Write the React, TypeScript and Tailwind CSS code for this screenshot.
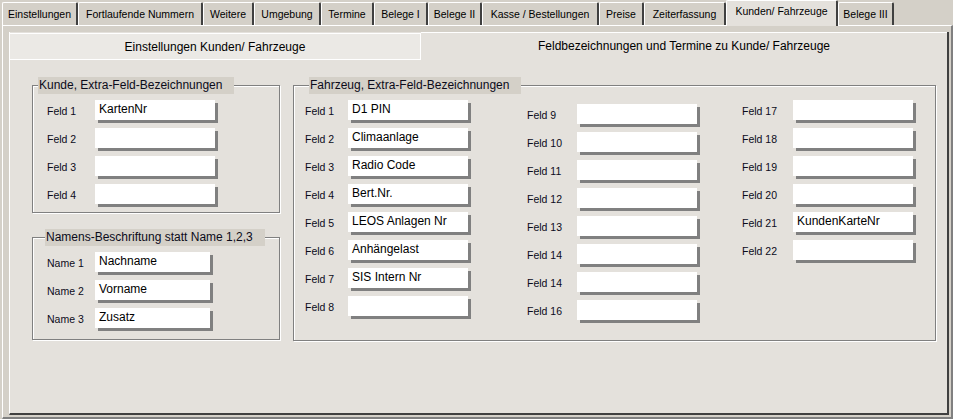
const topTabs = [
  { label: 'Einstellungen', w: 'w-[76px]' },
  { label: 'Fortlaufende Nummern', w: 'w-[125px]' },
  { label: 'Weitere', w: 'w-[51px]' },
  { label: 'Umgebung', w: 'w-[67px]' },
  { label: 'Termine', w: 'w-[53px]' },
  { label: 'Belege I', w: 'w-[54px]' },
  { label: 'Belege II', w: 'w-[54px]' },
  { label: 'Kasse / Bestellungen', w: 'w-[117px]' },
  { label: 'Preise', w: 'w-[45px]' },
  { label: 'Zeiterfassung', w: 'w-[82px]' },
  { label: 'Kunden/ Fahrzeuge', w: 'w-[112px]', active: true },
  { label: 'Belege III', w: 'w-[56px]' },
];

const kundeFields = ['KartenNr', '', '', ''];
const names = ['Nachname', 'Vorname', 'Zusatz'];
const col1 = ['D1 PIN', 'Climaanlage', 'Radio Code', 'Bert.Nr.', 'LEOS Anlagen Nr', 'Anhängelast', 'SIS Intern Nr', ''];
const col2 = ['Feld 9', 'Feld 10', 'Feld 11', 'Feld 12', 'Feld 13', 'Feld 14', 'Feld 14', 'Feld 16'];
const col3 = [
  { label: 'Feld 17', value: '' },
  { label: 'Feld 18', value: '' },
  { label: 'Feld 19', value: '' },
  { label: 'Feld 20', value: '' },
  { label: 'Feld 21', value: 'KundenKarteNr' },
  { label: 'Feld 22', value: '' },
];

function TextBox({ value, width }: { value: string; width: string }) {
  return (
    <div className={`${width} h-[20px] bg-white pl-[4px] text-[12px] leading-[18px] text-black shadow-[3px_3px_0_#808080]`}>
      {value}
    </div>
  );
}

function Row({ label, value, labelW, inputW }: { label: string; value: string; labelW: string; inputW: string }) {
  return (
    <div className="flex items-center">
      <span className={`${labelW} pt-[3px] text-[10.5px] text-[#0b0b1a]`}>{label}</span>
      <TextBox value={value} width={inputW} />
    </div>
  );
}

function GroupBox({ title, legendMl, className, children }: { title: string; legendMl: string; className: string; children: React.ReactNode }) {
  return (
    <div className={`${className} border border-[#808080] shadow-[1px_1px_0_#fff,inset_1px_1px_0_#fff]`}>
      <div className={`${legendMl} -mt-[9px] h-[17px] w-fit bg-[#d4d0c8] pl-[1px] pr-[12px] text-[12px] leading-[17px] text-[#0b0b1a]`}>
        {title}
      </div>
      {children}
    </div>
  );
}

export default function App() {
  return (
    <div className="flex h-[419px] w-[953px] flex-col overflow-hidden bg-[#d4d0c8] font-['Liberation_Sans',Arial,sans-serif] text-black">
      {/* Top tabs */}
      <div className="flex h-[25px] items-end pl-[2px]">
        {topTabs.map((t) =>
          t.active ? (
            <div
              key={t.label}
              className={`${t.w} relative z-10 -mb-[1px] flex h-[26px] items-center justify-center rounded-t-[2px] border-l border-t border-r-2 border-white border-r-[#404040] bg-[#e4e1dc] pb-[3px] text-[10.5px]`}
            >
              {t.label}
            </div>
          ) : (
            <div
              key={t.label}
              className={`${t.w} flex h-[23px] items-center justify-center rounded-t-[2px] border-l border-t border-r-2 border-white border-r-[#404040] pt-[1px] text-[10.5px]`}
            >
              {t.label}
            </div>
          )
        )}
      </div>

      {/* Outer panel */}
      <div className="ml-[2px] h-[394px] w-[951px] border-l border-t border-r-2 border-b-2 border-white border-r-[#808080] border-b-[#808080] pl-[6px] pt-[6px]">
        <div className="flex h-[383px] w-[940px] flex-col border-l border-b-2 border-r-2 border-white border-b-[#404040] border-r-[#404040] bg-[#e4e1dc]">
          {/* Inner tabs */}
          <div className="flex h-[28px]">
            <div className="mt-[1px] flex w-[411px] items-center justify-center border-t border-b border-r border-white bg-[#ebe9e5] text-[12px]">
              Einstellungen Kunden/ Fahrzeuge
            </div>
            <div className="flex flex-1 items-center justify-center border-t border-white pb-[1px] text-[12px]">
              Feldbezeichnungen und Termine zu Kunde/ Fahrzeuge
            </div>
          </div>

          {/* Content */}
          <div className="flex pl-[22px] pt-[25px]">
            <div className="flex w-[248px] flex-col gap-[24px]">
              <GroupBox title="Kunde, Extra-Feld-Bezeichnungen" legendMl="ml-[5px]" className="h-[128px]">
                <div className="flex flex-col gap-[8px] pl-[14px] pt-[6px]">
                  {kundeFields.map((v, i) => (
                    <Row key={i} label={`Feld ${i + 1}`} value={v} labelW="w-[48px]" inputW="w-[120px]" />
                  ))}
                </div>
              </GroupBox>
              <GroupBox title="Namens-Beschriftung statt Name 1,2,3" legendMl="ml-[12px]" className="h-[103px]">
                <div className="flex flex-col gap-[8px] pl-[14px] pt-[6px]">
                  {names.map((v, i) => (
                    <Row key={i} label={`Name ${i + 1}`} value={v} labelW="w-[48px]" inputW="w-[115px]" />
                  ))}
                </div>
              </GroupBox>
            </div>

            <GroupBox title="Fahrzeug, Extra-Feld-Bezeichnungen" legendMl="ml-[15px]" className="ml-[13px] h-[256px] w-[643px]">
              <div className="flex pl-[11px] pt-[6px]">
                <div className="flex w-[222px] flex-col gap-[8px]">
                  {col1.map((v, i) => (
                    <Row key={i} label={`Feld ${i + 1}`} value={v} labelW="w-[43px]" inputW="w-[120px]" />
                  ))}
                </div>
                <div className="mt-[4px] flex w-[215px] flex-col gap-[8px]">
                  {col2.map((l, i) => (
                    <Row key={i} label={l} value="" labelW="w-[50px]" inputW="w-[120px]" />
                  ))}
                </div>
                <div className="flex flex-col gap-[8px]">
                  {col3.map((f) => (
                    <Row key={f.label} label={f.label} value={f.value} labelW="w-[51px]" inputW="w-[120px]" />
                  ))}
                </div>
              </div>
            </GroupBox>
          </div>
        </div>
      </div>
    </div>
  );
}
